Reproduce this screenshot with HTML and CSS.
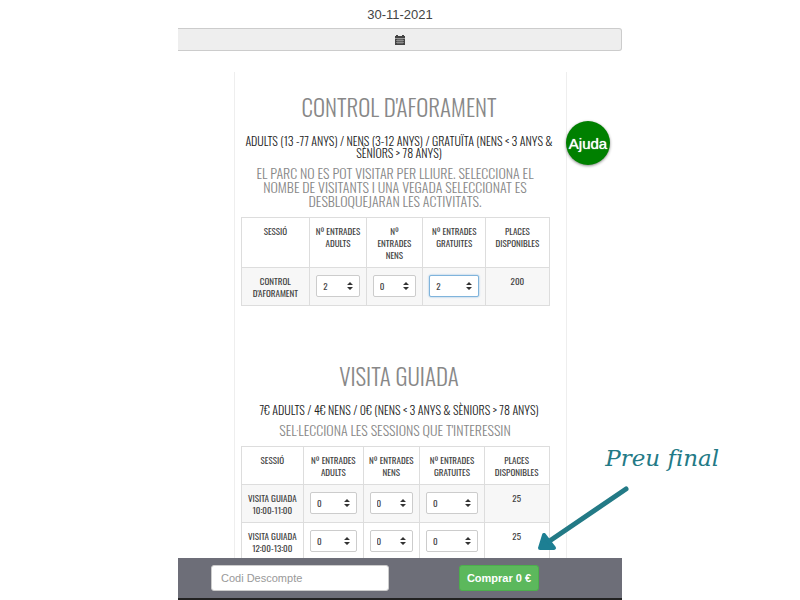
FILE: index.html
```html
<!DOCTYPE html>
<html lang="ca">
<head>
    <meta charset="UTF-8">
    <meta name="viewport" content="width=device-width, initial-scale=1.0">
    <title>Control d'aforament</title>
    <link rel="stylesheet" href="styles.css">
</head>
<body>
    <div class="page">
        <main class="content">
            <div class="date">30-11-2021</div>
            <button type="button" class="calendar-btn" aria-label="Calendari">
                <svg width="10" height="10" viewBox="0 0 10 10">
                    <path fill="#444" d="M0 1h1V0h2v1h4V0h2v1h1v2H0zM0 3.5h10V10H0z"/>
                    <path stroke="#bbb" stroke-width="0.5" fill="none" d="M1 5.5h8M1 7.5h8M3 4v5M5 4v5M7 4v5"/>
                </svg>
            </button>

            <div class="card">
                <section class="activity">
                    <h1>CONTROL D'AFORAMENT</h1>
                    <p class="prices">ADULTS (13 -77 ANYS) / NENS (3-12 ANYS) / GRATUÏTA (NENS &lt; 3 ANYS &amp;<br>SÈNIORS &gt; 78 ANYS)</p>
                    <div class="sessions">
                        <h2>EL PARC NO ES POT VISITAR PER LLIURE. SELECCIONA EL<br>NOMBE DE VISITANTS I UNA VEGADA SELECCIONAT ES<br>DESBLOQUEJARAN LES ACTIVITATS.</h2>
                        <table class="control">
                            <thead>
                                <tr>
                                    <th>SESSIÓ</th>
                                    <th>Nº ENTRADES<br>ADULTS</th>
                                    <th>Nº<br>ENTRADES<br>NENS</th>
                                    <th>Nº ENTRADES<br>GRATUITES</th>
                                    <th>PLACES<br>DISPONIBLES</th>
                                </tr>
                            </thead>
                            <tbody>
                                <tr>
                                    <td>CONTROL<br>D'AFORAMENT</td>
                                    <td><select aria-label="Adults"><option>2</option></select></td>
                                    <td><select aria-label="Nens"><option>0</option></select></td>
                                    <td><select class="active" aria-label="Gratuites"><option>2</option></select></td>
                                    <td>200</td>
                                </tr>
                            </tbody>
                        </table>
                    </div>
                </section>

                <section class="activity">
                    <h1>VISITA GUIADA</h1>
                    <p class="prices">7€ ADULTS / 4€ NENS / 0€ (NENS &lt; 3 ANYS &amp; SÈNIORS &gt; 78 ANYS)</p>
                    <div class="sessions">
                        <h2>SEL·LECCIONA LES SESSIONS QUE T'INTERESSIN</h2>
                        <table class="guided">
                            <thead>
                                <tr>
                                    <th>SESSIÓ</th>
                                    <th>Nº ENTRADES<br>ADULTS</th>
                                    <th>Nº ENTRADES<br>NENS</th>
                                    <th>Nº ENTRADES<br>GRATUITES</th>
                                    <th>PLACES<br>DISPONIBLES</th>
                                </tr>
                            </thead>
                            <tbody>
                                <tr>
                                    <td>VISITA GUIADA<br>10:00-11:00</td>
                                    <td><select aria-label="Adults"><option>0</option></select></td>
                                    <td><select aria-label="Nens"><option>0</option></select></td>
                                    <td><select aria-label="Gratuites"><option>0</option></select></td>
                                    <td>25</td>
                                </tr>
                                <tr>
                                    <td>VISITA GUIADA<br>12:00-13:00</td>
                                    <td><select aria-label="Adults"><option>0</option></select></td>
                                    <td><select aria-label="Nens"><option>0</option></select></td>
                                    <td><select aria-label="Gratuites"><option>0</option></select></td>
                                    <td>25</td>
                                </tr>
                            </tbody>
                        </table>
                    </div>
                </section>
            </div>
        </main>

        <footer class="checkout">
            <input type="text" placeholder="Codi Descompte" aria-label="Codi Descompte">
            <button type="button" class="buy">Comprar 0 €</button>
        </footer>

        <button type="button" class="help">Ajuda</button>

        <!-- Note pointing at the final price -->
        <div class="note">
            <span>Preu final</span>
            <svg width="100" height="68" viewBox="0 0 100 68">
                <path d="M93 3L18 54" stroke="#237a86" stroke-width="5" stroke-linecap="round"/>
                <path d="M11 49L21 62L7 62z" fill="#1d7f93" stroke="#1d7f93" stroke-width="4" stroke-linejoin="round"/>
            </svg>
        </div>
    </div>
</body>
</html>
```

FILE: styles.css
```css
body {
    margin: 0;
    background-color: #fff;
    color: #444;
    font-family: "Liberation Sans", Arial, sans-serif;
}
.page {
    position: relative;
    display: flex;
    flex-direction: column;
    width: 55.5%;
    min-width: 444px;
    height: 100vh;
    margin: 0 auto;
}
.content {
    flex: 1;
    min-height: 0;
    overflow: hidden;
}
.date {
    padding: 6px 0 4px;
    font-size: 13px;
    line-height: 18px;
    text-align: center;
}
.calendar-btn {
    display: flex;
    align-items: center;
    justify-content: center;
    width: 100%;
    height: 23px;
    padding: 0;
    border: 1px solid #ccc;
    border-left: 0;
    border-radius: 0 3px 3px 0;
    background-color: #eee;
}
.card {
    width: 75%;
    box-sizing: border-box;
    margin: 21px auto 0;
    padding: 0 8px 0 6px;
    border: 1px solid #eee;
    border-width: 0 1px;
    font-family: Oswald, "Roboto Condensed", "Liberation Sans Narrow", "Liberation Sans", sans-serif;
    font-weight: 300;
    text-align: center;
    white-space: nowrap;
}
.activity {
    padding-bottom: 35px;
}
.activity h1 {
    margin: 0;
    padding: 19px 0 12px;
    color: #888;
    font-size: 23px;
    font-weight: 300;
    line-height: 32px;
}
.prices {
    margin: 0 -8px;
    color: #222;
    font-size: 12px;
    line-height: 12px;
}
.sessions {
    padding-right: 8px;
}
.sessions h2 {
    margin: 0 -8px;
    padding: 7px 0 9px;
    color: #888;
    font-size: 14px;
    font-weight: 300;
    line-height: 14px;
}
table {
    width: 100%;
    table-layout: fixed;
    border-collapse: collapse;
    border: 1px solid #ddd;
    font-size: 9px;
    line-height: 12px;
}
th, td {
    height: 24px;
    padding: 7px 6px 6px;
    border: 1px solid #ddd;
    font-weight: 400;
    vertical-align: top;
}
th, td:first-child {
    padding-left: 0;
    padding-right: 0;
}
tbody tr:nth-child(odd) {
    background-color: #f7f7f7;
}
.control th:nth-child(1) { width: 22%; }
.control th:nth-child(2) { width: 18%; }
.control th:nth-child(3) { width: 18%; }
.guided th:nth-child(1) { width: 20%; }
.guided th:nth-child(2) { width: 19%; }
.guided th:nth-child(3) { width: 18%; }
select {
    display: block;
    width: 100%;
    height: 22px;
    padding: 0 6px;
    border: 1px solid #ccc;
    border-radius: 2px;
    appearance: none;
    background: #fff url("data:image/svg+xml,%3Csvg xmlns='http://www.w3.org/2000/svg' viewBox='0 0 6 8'%3E%3Cpath fill='%23333' d='M3 0l3 3H0zM3 8l3-3H0z'/%3E%3C/svg%3E") no-repeat right 6px center / 6px 8px;
    color: #444;
    font-family: inherit;
    font-size: 9px;
}
select.active {
    border-color: #80b4dc;
    box-shadow: 0 0 2px #80b4dc;
}
.checkout {
    display: flex;
    align-items: flex-start;
    justify-content: space-between;
    height: 33px;
    padding: 7px 83px 0 33px;
    border-bottom: 2px solid #222;
    background-color: #6d6e78;
}
.checkout input {
    box-sizing: border-box;
    width: 178px;
    height: 26px;
    padding: 0 9px;
    border: 1px solid #ccc;
    border-radius: 3px;
    font-family: inherit;
    font-size: 11px;
}
.checkout input::placeholder {
    color: #999;
}
.buy {
    width: 80px;
    height: 26px;
    padding: 0;
    border: 1px solid #4cae4c;
    border-radius: 3px;
    background-color: #5cb85c;
    color: #fff;
    font-family: inherit;
    font-size: 11px;
    font-weight: bold;
}
.help {
    position: absolute;
    top: 121px;
    right: 12px;
    width: 44px;
    height: 44px;
    padding: 0;
    border: 0;
    border-radius: 50%;
    background-color: #008000;
    box-shadow: 0 1px 3px #888;
    color: #fff;
    font-family: inherit;
    font-size: 15px;
    text-shadow: 0 0 1px #fff;
}
.note {
    position: absolute;
    bottom: 46px;
    left: 80%;
    display: flex;
    flex-direction: column;
    gap: 13px;
    color: #237a86;
    font-family: "Lucida Handwriting", "DejaVu Serif", serif;
    font-size: 23px;
    font-style: italic;
    line-height: 30px;
    white-space: nowrap;
}
.note span {
    padding-left: 72px;
}
```
